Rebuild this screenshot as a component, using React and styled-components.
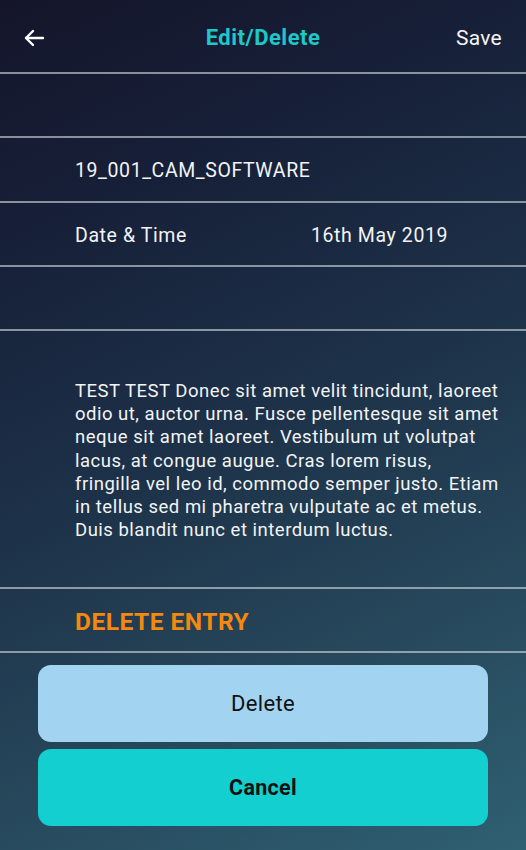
import React from "react"
import styled, { createGlobalStyle } from "styled-components"

const GlobalStyle = createGlobalStyle`
  html, body { margin: 0; padding: 0; }
  body { font-family: Roboto, "Noto Sans", sans-serif; }
`

const Screen = styled.div`
  width: 526px;
  height: 850px;
  overflow: hidden;
  display: flex;
  flex-direction: column;
  color: #f2f4f5;
  background: linear-gradient(155deg, #14152a 0%, #17213a 25%, #1d3249 50%, #27485c 75%, #2f6072 100%);
`

const Header = styled.div`
  height: 69px;
  padding-top: 3px;
  display: grid;
  grid-template-columns: 80px 1fr 80px;
  align-items: center;
  border-bottom: 2px solid rgba(200, 208, 214, 0.65);
`

const BackButton = styled.button`
  background: none;
  border: none;
  padding: 0 0 0 22px;
  display: flex;
  align-items: center;
  color: #fff;
  cursor: pointer;
`

const Title = styled.h1`
  margin: 0;
  text-align: center;
  font-size: 22px;
  font-weight: 700;
  letter-spacing: 0.5px;
  color: #1ec8c8;
`

const SaveLink = styled.span`
  justify-self: end;
  padding-right: 24px;
  font-size: 21px;
  letter-spacing: 0.3px;
  color: #f4f4f4;
`

const Row = styled.div`
  height: 59.25px;
  padding: 3px 0 0 75px;
  display: grid;
  grid-template-columns: ${props => (props.$split ? "236px 1fr" : "1fr")};
  align-items: center;
  font-size: 19.5px;
  letter-spacing: 0.6px;
  border-bottom: 2px solid rgba(200, 208, 214, 0.65);
`

const Description = styled.p`
  margin: 0;
  height: 207px;
  padding: 49px 24px 0 75px;
  font-size: 18.5px;
  letter-spacing: 0.5px;
  line-height: 23.2px;
  border-bottom: 2px solid rgba(200, 208, 214, 0.65);
`

const DangerRow = styled(Row)`
  color: #f5890f;
  font-size: 24.5px;
  font-weight: 700;
  letter-spacing: 0.5px;
`

const Actions = styled.div`
  display: flex;
  flex-direction: column;
  gap: 7px;
  padding: 12px 38px 0 38px;
`

const ActionButton = styled.button`
  height: 77px;
  border: none;
  border-radius: 13px;
  font-family: Roboto, "Noto Sans", sans-serif;
  font-size: ${props => (props.$primary ? "21.5px" : "22px")};
  letter-spacing: 0.3px;
  font-weight: ${props => (props.$primary ? 700 : 400)};
  color: #111;
  background: ${props => (props.$primary ? "#14cfcf" : "#a2d4f1")};
  cursor: pointer;
`

const BackArrow = () => (
  <svg width="24" height="24" viewBox="0 0 24 24" fill="none" stroke="currentColor" strokeWidth="2.4" strokeLinecap="round" strokeLinejoin="round">
    <path d="M21 12H4" />
    <path d="M11 5l-7 7 7 7" />
  </svg>
)

export default function App() {
  return (
    <>
      <GlobalStyle />
      <Screen>
        <Header>
          <BackButton aria-label="Back"><BackArrow /></BackButton>
          <Title>Edit/Delete</Title>
          <SaveLink>Save</SaveLink>
        </Header>
        <Row />
        <Row>19_001_CAM_SOFTWARE</Row>
        <Row $split>
          <span>Date &amp; Time</span>
          <span>16th May 2019</span>
        </Row>
        <Row />
        <Description>
          TEST TEST Donec sit amet velit tincidunt, laoreet odio ut, auctor urna. Fusce pellentesque sit amet neque sit amet laoreet. Vestibulum ut volutpat lacus, at congue augue. Cras lorem risus, fringilla vel leo id, commodo semper justo. Etiam in tellus sed mi pharetra vulputate ac et metus. Duis blandit nunc et interdum luctus.
        </Description>
        <DangerRow>DELETE ENTRY</DangerRow>
        <Actions>
          <ActionButton>Delete</ActionButton>
          <ActionButton $primary>Cancel</ActionButton>
        </Actions>
      </Screen>
    </>
  )
}
